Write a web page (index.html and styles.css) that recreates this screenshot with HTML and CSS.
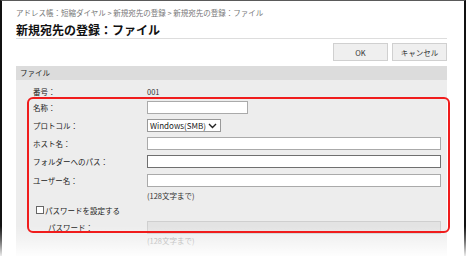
FILE: index.html
```html
<!DOCTYPE html>
<html lang="ja">
<head>
    <meta charset="UTF-8">
    <title>新規宛先の登録：ファイル</title>
    <link rel="stylesheet" href="styles.css">
</head>
<body>
    <div class="screen">
        <div class="frame">
            <div class="page">
                <div class="breadcrumb">アドレス帳：短縮ダイヤル &gt; 新規宛先の登録 &gt; 新規宛先の登録：ファイル</div>
                <h1 class="title">新規宛先の登録：ファイル</h1>
                <div class="actions">
                    <button class="btn">OK</button>
                    <button class="btn">キャンセル</button>
                </div>

                <div class="panel">
                    <div class="panel-head">ファイル</div>
                    <div class="panel-body">
                        <div class="form">
                            <div class="label">番号：</div>
                            <div class="value">001</div>

                            <div class="label">名称：</div>
                            <div class="value"><input type="text" class="field field-short"></div>

                            <div class="label">プロトコル：</div>
                            <div class="value">
                                <div class="select">
                                    <span>Windows(SMB)</span>
                                    <svg width="9" height="6" viewBox="0 0 9 6"><path d="M1 1 L4.5 4.5 L8 1" fill="none" stroke="#222" stroke-width="1.4"/></svg>
                                </div>
                            </div>

                            <div class="label">ホスト名：</div>
                            <div class="value"><input type="text" class="field"></div>

                            <div class="label">フォルダーへのパス：</div>
                            <div class="value"><input type="text" class="field field-focus"></div>

                            <div class="label">ユーザー名：</div>
                            <div class="value"><input type="text" class="field"></div>

                            <div></div>
                            <div class="note">(128文字まで)</div>

                            <div class="check-row"><span class="checkbox"></span>パスワードを設定する</div>

                            <div class="label label-sub">パスワード：</div>
                            <div class="value"><input type="text" class="field field-disabled" disabled></div>

                            <div></div>
                            <div class="note note-disabled">(128文字まで)</div>
                        </div>
                    </div>
                </div>
            </div>
        </div>
        <div class="fade"></div>
        <div class="callout"></div>
    </div>
</body>
</html>
```

FILE: styles.css
```css
/* Общие */
body {
    margin: 0;
    padding: 0;
    background-color: #fff;
    font-family: "Noto Sans CJK JP", "DejaVu Sans", sans-serif;
    color: #333;
}

.screen {
    position: relative;
    width: 466px;
    height: 256px;
    overflow: hidden;
}

.frame {
    height: 256px;
    box-sizing: border-box;
    border-top: 1px solid #5a5a5a;
    border-left: 2px solid #111;
    border-right: 2px solid #111;
    background-color: #fff;
}

.page {
    padding: 7px 17px 0 14px;
}

.breadcrumb {
    font-size: 7.5px;
    line-height: 10px;
    color: #777;
}

.title {
    margin: 5px 0 0 0;
    font-size: 12px;
    line-height: 14px;
    font-weight: bold;
    color: #111;
    padding-bottom: 1px;
    border-bottom: 1px solid #ddd;
}

/* Кнопки */
.actions {
    display: flex;
    justify-content: flex-end;
    gap: 4px;
    margin-top: 4px;
}

.btn {
    width: 55px;
    height: 18px;
    padding: 0;
    font-family: inherit;
    font-size: 7.5px;
    color: #333;
    background-color: #efefef;
    border: 1px solid #d0d0d0;
    border-radius: 0;
}

/* Панель */
.panel {
    margin-top: 5px;
}

.panel-head {
    height: 14px;
    line-height: 14px;
    padding-left: 4px;
    font-size: 7.5px;
    color: #222;
    background-color: #dcdcdc;
}

.panel-body {
    background-color: #ededed;
    padding: 4px 6px 20px 17px;
    height: 200px;
}

.form {
    display: grid;
    grid-template-columns: 114px 1fr;
    grid-template-rows: 14px 18px 19px 17px 18px 20px 11px 18px 17px 9px;
    align-items: center;
    font-size: 7.5px;
}

.label {
    color: #222;
}

.label-sub {
    padding-left: 15px;
}

.value {
    display: flex;
    align-items: center;
    color: #333;
}

.field {
    box-sizing: border-box;
    width: 100%;
    height: 13px;
    margin: 0;
    padding: 0 2px;
    border: 1px solid #aaa;
    background-color: #fff;
}

.field-short {
    width: 101px;
}

.field-focus {
    border-color: #6f6f6f;
}

.field-disabled {
    background-color: #e3e3e3;
    border-color: #cfcfcf;
}

.select {
    box-sizing: border-box;
    width: 74px;
    height: 13px;
    display: flex;
    align-items: center;
    justify-content: space-between;
    padding: 0 3px 0 2px;
    border: 1px solid #999;
    background-color: #fff;
    font-size: 8px;
    color: #222;
}

.note {
    color: #333;
    line-height: 9px;
}

.note-disabled {
    color: #999;
}

.check-row {
    grid-column: 1 / 3;
    display: flex;
    align-items: center;
    padding-left: 3px;
    color: #222;
}

.checkbox {
    display: inline-block;
    width: 6px;
    height: 6px;
    border: 1px solid #666;
    background-color: #fff;
    margin-right: 1px;
}

/* Затухание снизу и красная рамка */
.fade {
    position: absolute;
    left: 0;
    right: 0;
    top: 226px;
    height: 30px;
    background: linear-gradient(rgba(255, 255, 255, 0), rgba(255, 255, 255, 0.35) 45%, rgba(255, 255, 255, 0.92));
}

.callout {
    position: absolute;
    left: 27px;
    top: 97px;
    width: 423px;
    height: 136px;
    box-sizing: border-box;
    border: 2px solid #f01c1c;
    border-radius: 6px;
}
```
